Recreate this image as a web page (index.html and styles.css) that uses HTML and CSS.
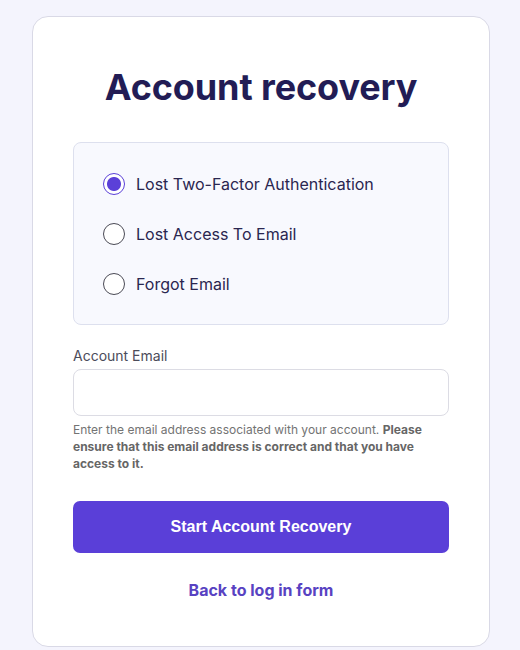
FILE: index.html
```html
<!DOCTYPE html>
<html lang="en">
<head>
<meta charset="utf-8">
<title>Account recovery</title>
<link rel="stylesheet" href="styles.css">
</head>
<body>
<main class="card">
  <h1 class="title">Account recovery</h1>
  <div class="options">
    <label class="option">
      <span class="radio radio-checked"></span>
      <span class="option-text">Lost Two-Factor Authentication</span>
    </label>
    <label class="option">
      <span class="radio"></span>
      <span class="option-text">Lost Access To Email</span>
    </label>
    <label class="option">
      <span class="radio"></span>
      <span class="option-text">Forgot Email</span>
    </label>
  </div>
  <div class="field">
    <label class="field-label">Account Email</label>
    <div class="input"></div>
    <p class="help"><span class="help-normal">Enter the email address associated with your account.</span> <strong class="help-strong">Please ensure that this email address is correct and that you have access to it.</strong></p>
  </div>
  <button class="btn">Start Account Recovery</button>
  <a class="back" href="#">Back to log in form</a>
</main>
</body>
</html>
```

FILE: styles.css
```css
html { background: #f4f4fd; }
body {
  margin: 0;
  font-family: Inter, "Noto Sans", sans-serif;
}
.card {
  box-sizing: border-box;
  width: 458px;
  margin: 16px 0 0 32px;
  background: #ffffff;
  border: 1px solid #d9d9e6;
  border-radius: 16px;
  padding: 48px 40px 46px;
  display: flex;
  flex-direction: column;
}
.title {
  margin: 0;
  text-align: center;
  font-size: 36px;
  line-height: 44px;
  font-weight: 700;
  color: #221c55;
  letter-spacing: -0.1px;
}
.options {
  margin-top: 33px;
  background: #f8f9fe;
  border: 1px solid #dde0ee;
  border-radius: 8px;
  padding: 16px 29px 15px;
  display: flex;
  flex-direction: column;
}
.option {
  height: 50px;
  display: flex;
  align-items: center;
  gap: 11px;
}
.radio {
  box-sizing: border-box;
  width: 22px;
  height: 22px;
  border-radius: 50%;
  border: 1px solid #4a4a55;
  background: #ffffff;
  flex: none;
}
.radio-checked {
  border: 1.5px solid #5b40d8;
  background: radial-gradient(circle, #5b40d8 0 6.5px, #ffffff 7.5px);
}
.option-text {
  font-size: 16px;
  color: #2a2650;
}
.field {
  margin-top: 22px;
  display: flex;
  flex-direction: column;
}
.field-label {
  font-size: 14px;
  line-height: 18px;
  color: #4c4c5a;
}
.input {
  margin-top: 4px;
  box-sizing: border-box;
  height: 47px;
  border: 1px solid #dcdce4;
  border-radius: 8px;
  background: #ffffff;
}
.help {
  margin: 5px 0 0;
  font-size: 12px;
  line-height: 17px;
  color: #737373;
}
.help-strong {
  color: #666666;
  font-weight: 700;
}
.btn {
  margin-top: 29px;
  height: 52px;
  border: none;
  border-radius: 7px;
  background: #5a3fd8;
  color: #ffffff;
  font-family: "Liberation Sans", Arial, sans-serif;
  font-weight: 700;
  font-size: 16px;
}
.back {
  margin-top: 27px;
  align-self: center;
  font-size: 16px;
  line-height: 20px;
  font-weight: 700;
  color: #5842c2;
  text-decoration: none;
}
```
